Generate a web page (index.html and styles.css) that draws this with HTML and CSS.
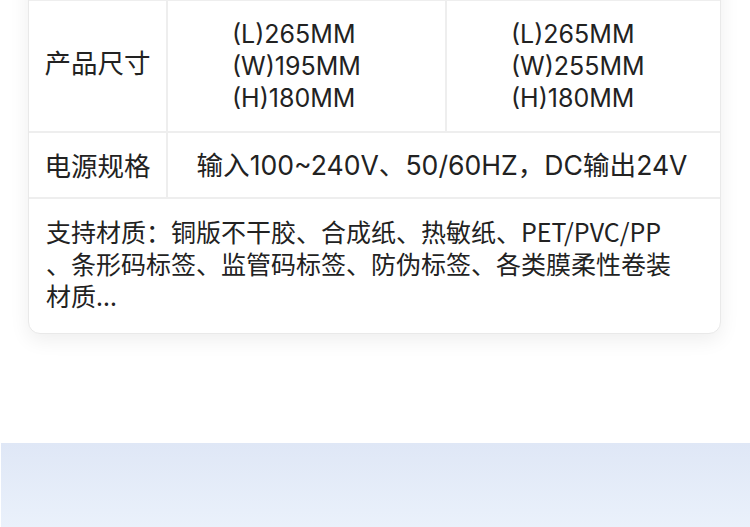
FILE: index.html
```html
<!DOCTYPE html>
<html lang="zh-CN">
<head>
  <meta charset="UTF-8">
  <meta name="viewport" content="width=device-width, initial-scale=1.0">
  <title>产品参数</title>
  <link rel="stylesheet" href="styles.css">
</head>
<body>
  <div class="card">
    <div class="spec">
      <div class="cell label">产品型号</div>
      <div class="cell val">XP-D464B</div>
      <div class="cell val">XP-DT427B</div>

      <div class="cell label tall">产品尺寸</div>
      <div class="cell val size">(L)265MM<br>(W)195MM<br>(H)180MM</div>
      <div class="cell val size">(L)265MM<br>(W)255MM<br>(H)180MM</div>

      <div class="cell label">电源规格</div>
      <div class="cell val wide">输入100~240V、50/60HZ，DC输出24V</div>

      <div class="cell note">支持材质：铜版不干胶、合成纸、热敏纸、PET/PVC/PP<br>、条形码标签、监管码标签、防伪标签、各类膜柔性卷装<br>材质...</div>
    </div>
  </div>

  <div class="next"></div>
</body>
</html>
```

FILE: styles.css
```css
body {
  margin: 0;
  background: #fff;
  font-family: "Noto Sans CJK SC", "Noto Sans", sans-serif;
  color: #222;
  overflow: hidden;
}
.card {
  margin: -66px 29px 0 28px;
  background: #fff;
  border: 1px solid #e9e9e9;
  border-radius: 12px;
  box-shadow: 0 6px 20px rgba(0, 0, 0, 0.07);
  overflow: hidden;
}
.spec {
  display: grid;
  grid-template-columns: 139px 279px 1fr;
}
.cell {
  display: flex;
  align-items: center;
  border-right: 2px solid #eeeeee;
  border-bottom: 2px solid #eeeeee;
  font-size: 25px;
  line-height: 32px;
}
.cell:nth-child(3n) {
  border-right: 0;
}
.label {
  justify-content: center;
  padding: 16px 0;
  font-size: 26.5px;
}
.label.tall {
  padding-bottom: 24px;
}
.val {
  font-family: Inter, "Noto Sans CJK SC", sans-serif;
  padding: 16px 0 16px 64px;
}
.val.size {
  padding-top: 17px;
  padding-bottom: 17px;
}
.val.wide {
  grid-column: span 2;
  border-right: 0;
  justify-content: center;
  padding: 16px 4px 16px 0;
  font-size: 26.6px;
}
.note {
  grid-column: 1 / -1;
  border: 0;
  padding: 16px 17px 22px 17px;
  display: block;
}
.next {
  margin: 109px 0 0 1px;
  height: 200px;
  background: linear-gradient(to bottom, #dfe7f6, #eaf1fb 84px, #eef3fc);
}
```
